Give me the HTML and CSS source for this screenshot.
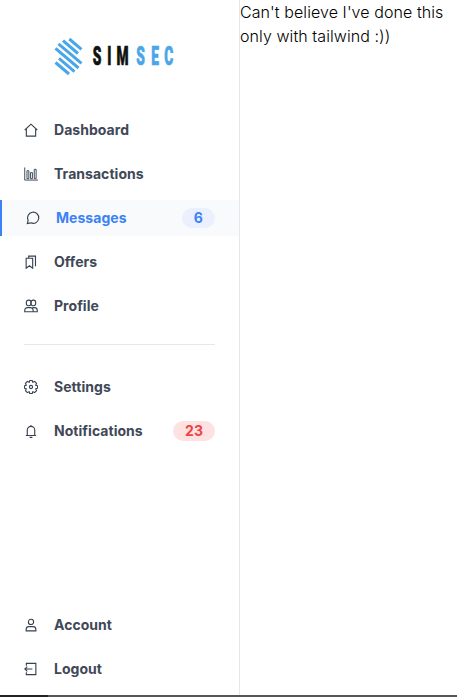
FILE: index.html
```html
<!DOCTYPE html>
<html lang="en">
<head>
<meta charset="utf-8">
<title>Simsec</title>
<link rel="stylesheet" href="styles.css">
</head>
<body>
<div class="layout">
  <aside class="sidebar">
    <svg class="logo" viewBox="0 0 140 52" role="img" aria-label="SIMSEC">
      <path class="mark" d="M24.300 9 36.500 19.300M18 10.700 33 23.500M13.500 13.900 36.500 33.400M10.500 18.400 33.500 38M14 28.400 29.500 41.600M10.500 32.500 24 44"/>
      <g class="wordmark" transform="scale(.55 1)">
        <text y="35" x="87 113 130">SIM</text>
        <text y="35" x="166 193 217" class="accent">SEC</text>
      </g>
    </svg>
    <nav class="menu">
      <a class="item"><svg class="icon" viewBox="0 0 15 15"><path d="M.8 7.500 7.500 1.300 14.200 7.500M2.500 6.500v7.500h10V6.500"/></svg><span>Dashboard</span></a>
      <a class="item"><svg class="icon thin" viewBox="0 0 15 15"><path d="M.8 .5v13.500H15M3.200 12.500V4h2v8.500zM7 12.500V6h2v6.500zM11 12.500V2.500h2v10z"/></svg><span>Transactions</span></a>
      <a class="item active"><svg class="icon" viewBox="0 0 15 15"><path d="m1.400 13.500.9-3.600A6 6 0 1 1 5.200 12.700z"/></svg><span>Messages</span><b class="badge">6</b></a>
      <a class="item"><svg class="icon" viewBox="0 0 15 15"><path d="M5 3V1.200h7.300v10.800M2.300 3.500h7v10.700L5.800 11.500 2.300 14.200z"/></svg><span>Offers</span></a>
      <a class="item"><svg class="icon" viewBox="0 0 15 15"><rect x="2.500" y="1.200" width="5" height="6" rx="2.300"/><rect x="7.500" y="1.200" width="5" height="6" rx="2.300"/><path d="M.8 13.700v-1.500a3 3 0 0 1 3-3h3a3 3 0 0 1 3 3v1.500zM9.800 13.700h4.400v-1.500a3 3 0 0 0-3-3H9"/></svg><span>Profile</span></a>
      <hr class="divider">
      <a class="item"><svg class="icon gear" viewBox="0 0 15 15"><path d="M6.200.5h2.600l.6 2 2-1 2.100 2.100-1 2 2 .6v2.600l-2 .6 1 2-2.100 2.100-2-1-.6 2H6.200l-.6-2-2 1-2.100-2.100 1-2-2-.6V6.200l2-.6-1-2 2.100-2.100 2 1z"/><circle cx="7.500" cy="7.500" r="1.700"/></svg><span>Settings</span></a>
      <a class="item"><svg class="icon" viewBox="0 0 15 15"><path d="M2 12.300h11M3.500 12V6.500a4 4 0 0 1 8 0V12M7.500 1v1.500M6 14.300h3"/></svg><span>Notifications</span><b class="badge alert">23</b></a>
    </nav>
    <nav class="menu bottom">
      <a class="item"><svg class="icon" viewBox="0 0 15 15"><circle cx="7.500" cy="4.200" r="2.800"/><path d="M2.300 13.800v-1.500a3 3 0 0 1 3-3h4.400a3 3 0 0 1 3 3v1.500z"/></svg><span>Account</span></a>
      <a class="item"><svg class="icon" viewBox="0 0 15 15"><path d="M2.500 4V1.500h10.200v12H2.500V11M9 7.500H.9M3.500 5 .9 7.500l2.600 2.500"/></svg><span>Logout</span></a>
    </nav>
  </aside>
  <main class="content">Can't believe I've done this only with tailwind :))</main>
</div>
<footer class="edge"></footer>
</body>
</html>
```
FILE: styles.css
```css
* { box-sizing: border-box; }
body {
  margin: 0;
  height: 697px;
  display: flex;
  flex-direction: column;
  overflow: hidden;
  background: #fff;
  color: #000;
  font: 16px/24px Inter, sans-serif;
}
.layout { flex: 1; display: flex; min-height: 0; }
.sidebar {
  width: 240px;
  flex: none;
  display: flex;
  flex-direction: column;
  padding: 30px 0 8px;
  border-right: 1px solid #e5e7eb;
}
.logo { width: 140px; height: 52px; margin-left: 45px; flex: none; }
.mark { fill: none; stroke: #49a6e9; stroke-width: 3; }
.wordmark { font: 900 25px Roboto, sans-serif; fill: #111; stroke: #111; stroke-width: .7; }
.wordmark .accent { fill: #49a6e9; stroke: #49a6e9; }
.menu { display: flex; flex-direction: column; gap: 8px; margin-top: 30px; }
.bottom { margin-top: auto; }
.item {
  height: 36px;
  display: flex;
  align-items: center;
  gap: 16px;
  padding: 0 24px;
  color: #404857;
  font-size: 14px;
  line-height: 20px;
  font-weight: 700;
  letter-spacing: .04px;
}
.active { color: #3b82f6; background: #f9fafb; border-left: 2px solid #3b82f6; }
.icon { width: 14px; height: 14px; flex: none; fill: none; stroke: #374151; stroke-width: 1.2; }
.thin { stroke-width: 1; }
.gear { stroke-linejoin: round; }
.badge {
  margin-left: auto;
  padding: 0 12px;
  border-radius: 10px;
  background: #ebf0ff;
  font-weight: 700;
}
.alert { background: #fee2e2; color: #ef4444; }
.divider { width: 191px; height: 1px; margin: 12px 24px 16px; border: 0; background: #e5e7eb; }
.content { flex: 1; font-weight: 300; letter-spacing: .08px; }
.edge { height: 2px; flex: none; background: linear-gradient(to right, #222 48px, #555 48px); }
```
